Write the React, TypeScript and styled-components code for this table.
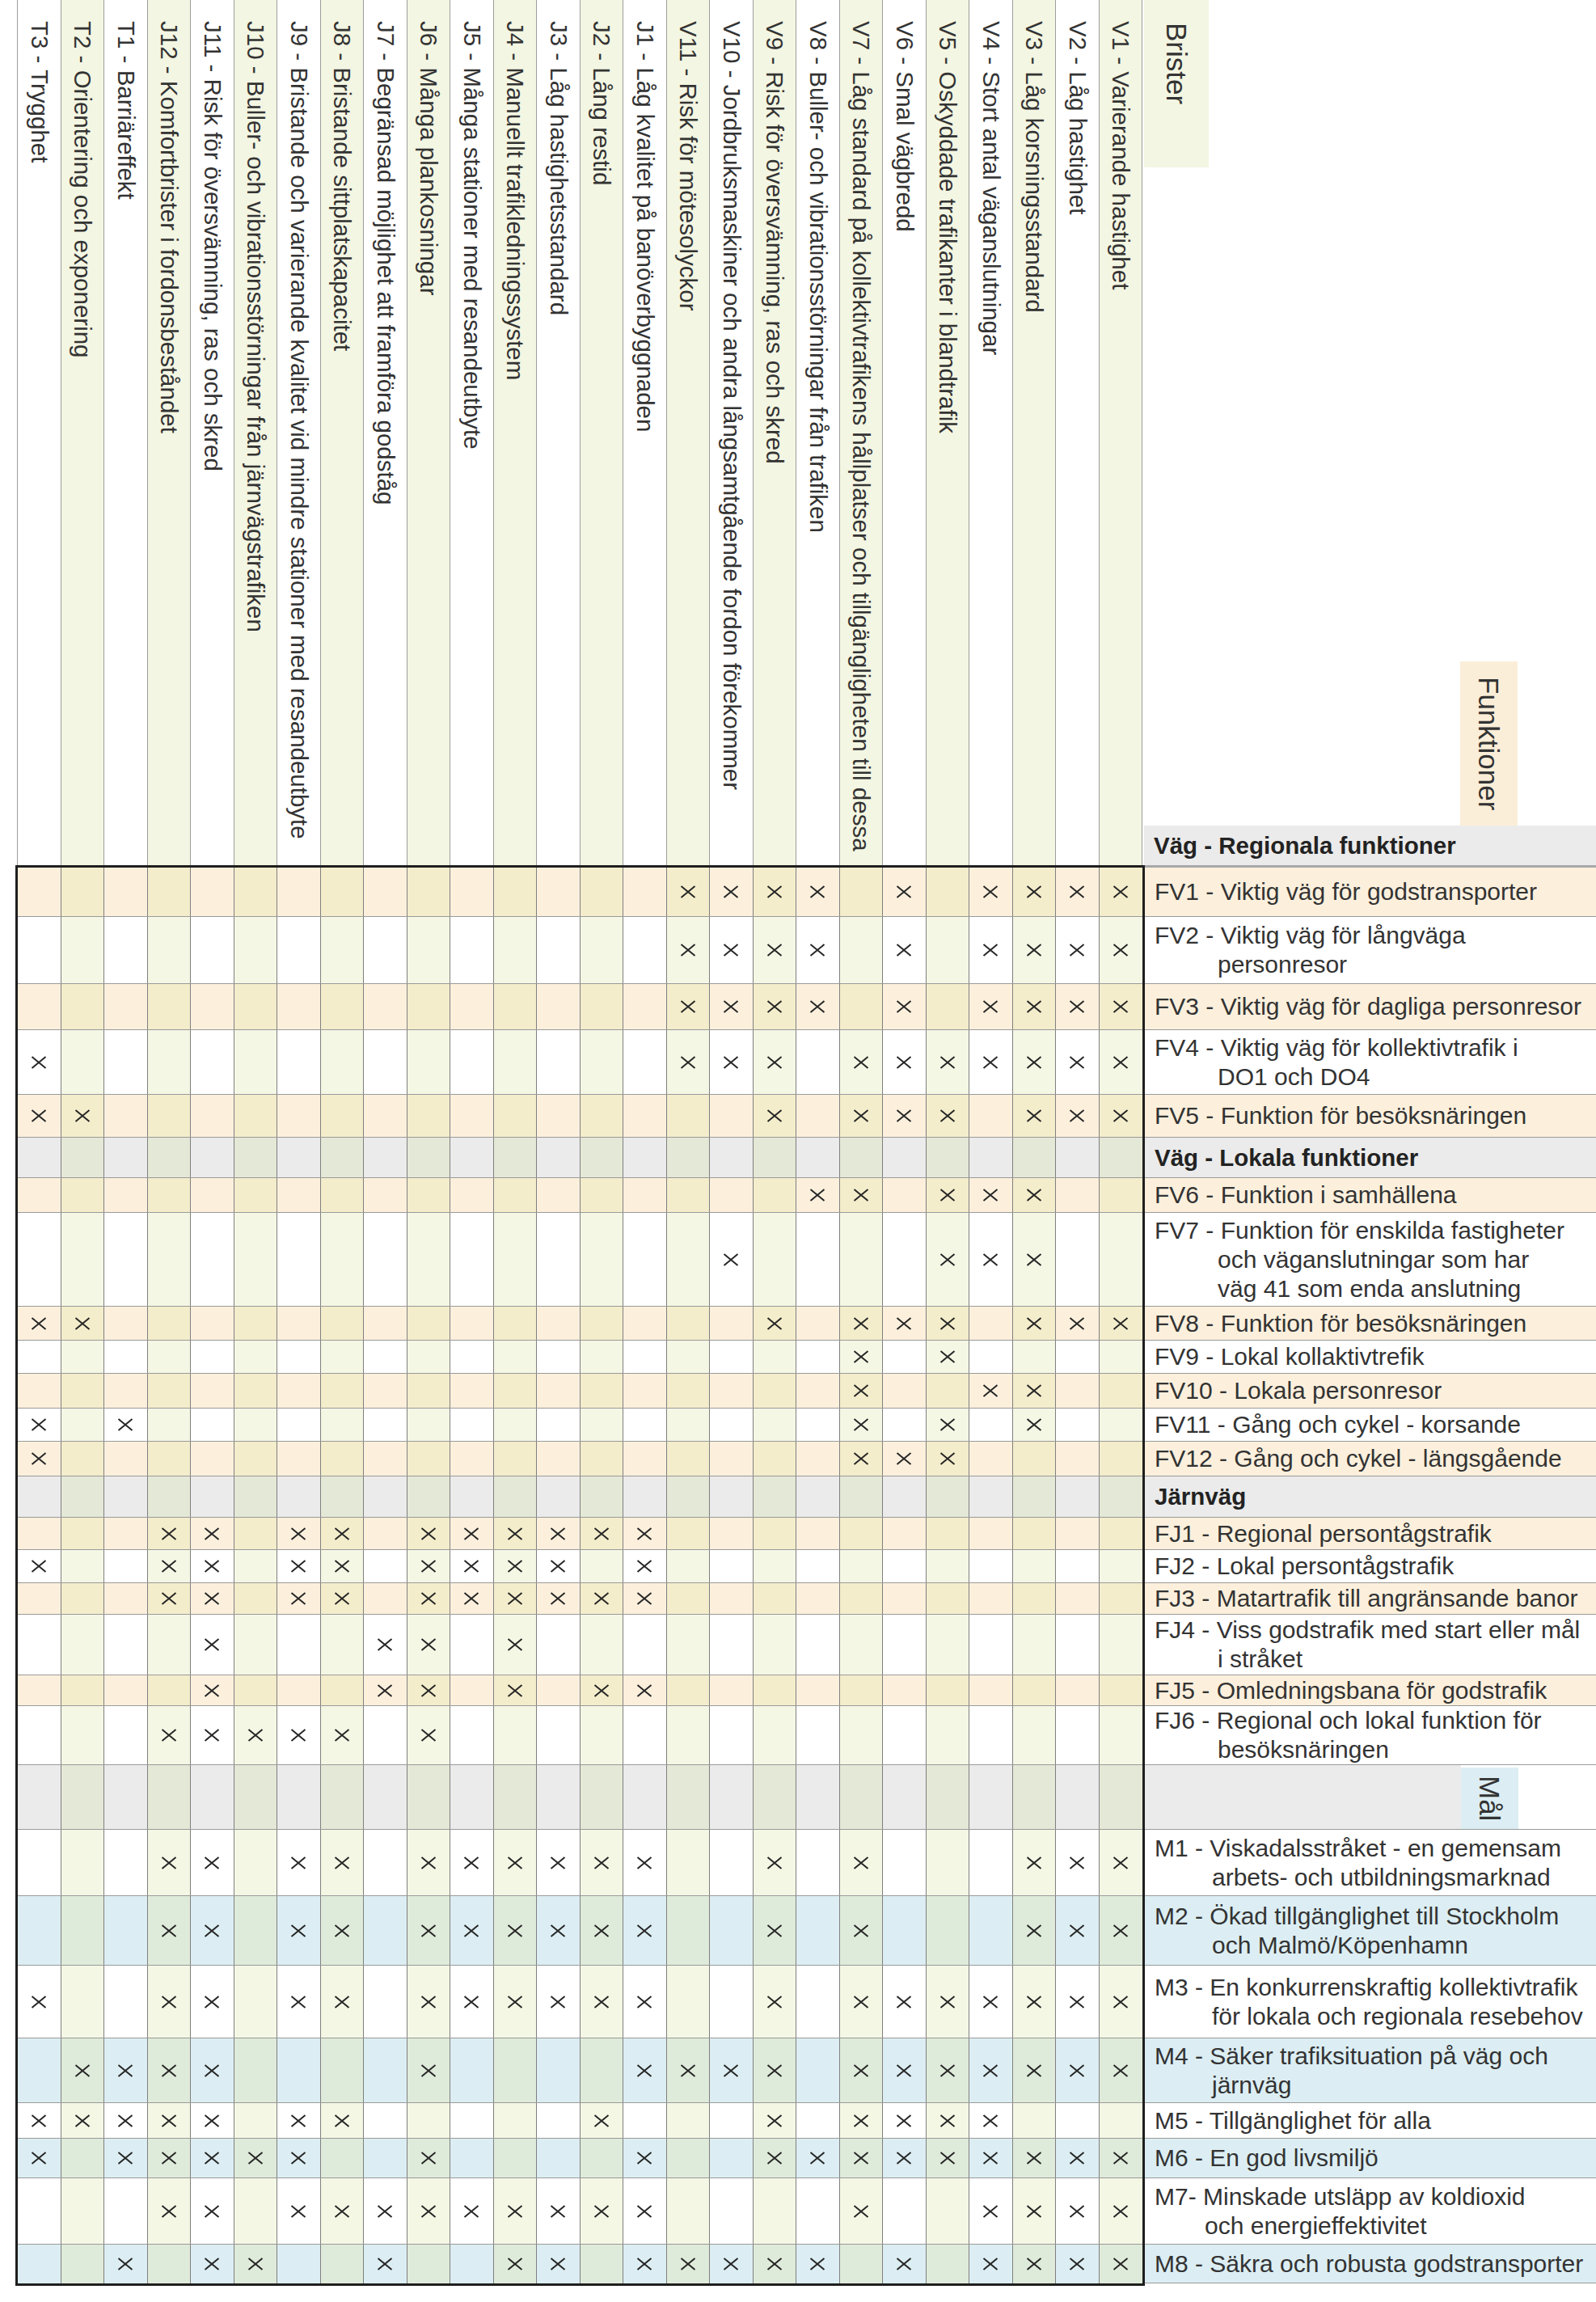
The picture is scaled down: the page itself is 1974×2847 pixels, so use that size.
import React from 'react';
import styled, { createGlobalStyle } from 'styled-components';

const GlobalStyle = createGlobalStyle`
  html, body { margin: 0; padding: 0; background: #ffffff; }
  body { font-family: "Liberation Sans", Arial, Helvetica, sans-serif; color: #333333; }
`;

type Tone = 'white' | 'peach' | 'grey' | 'blue';

const COL_W = 53.5;

const cellColors: Record<Tone, [string, string]> = {
  white: ['#ffffff', '#f4f7e4'],
  peach: ['#fcf0dd', '#f4edcb'],
  grey: ['#ebebeb', '#e4e8d6'],
  blue: ['#dceef3', '#dfebda'],
};

const labelColors: Record<Tone, string> = {
  white: '#ffffff',
  peach: '#fcf0dd',
  grey: '#ebebeb',
  blue: '#dceef3',
};

const columns = [
  'T3 - Trygghet',
  'T2 - Orientering och exponering',
  'T1 - Barriäreffekt',
  'J12 - Komfortbrister i fordonsbeståndet',
  'J11 - Risk för översvämning, ras och skred',
  'J10 - Buller- och vibrationsstörningar från järnvägstrafiken',
  'J9 - Bristande och varierande kvalitet vid mindre stationer med resandeutbyte',
  'J8 - Bristande sittplatskapacitet',
  'J7 - Begränsad möjlighet att framföra godståg',
  'J6 - Många plankosningar',
  'J5 - Många stationer med resandeutbyte',
  'J4 - Manuellt trafikledningssystem',
  'J3 - Låg hastighetsstandard',
  'J2 - Lång restid',
  'J1 - Låg kvalitet på banöverbyggnaden',
  'V11 - Risk för mötesolyckor',
  'V10 - Jordbruksmaskiner och andra långsamtgående fordon förekommer',
  'V9 - Risk för översvämning, ras och skred',
  'V8 - Buller- och vibrationsstörningar från trafiken',
  'V7 - Låg standard på kollektivtrafikens hållplatser och tillgängligheten till dessa',
  'V6 - Smal vägbredd',
  'V5 - Oskyddade trafikanter i blandtrafik',
  'V4 - Stort antal väganslutningar',
  'V3 - Låg korsningsstandard',
  'V2 - Låg hastighet',
  'V1 - Varierande hastighet',
];

type Row =
  | { kind: 'item'; tone: Tone; h: number; lines: string[]; hang: number; marks: number[] }
  | { kind: 'section'; tone: Tone; h: number; title: string }
  | { kind: 'goals'; tone: Tone; h: number };

const RD = [15, 16, 17, 18, 20, 22, 23, 24, 25];
const M12 = [3, 4, 6, 7, 9, 10, 11, 12, 13, 14, 17, 19, 23, 24, 25];

const rows: Row[] = [
  { kind: 'item', tone: 'peach', h: 61, hang: 90, lines: ['FV1 - Viktig väg för godstransporter'], marks: RD },
  { kind: 'item', tone: 'white', h: 83, hang: 90, lines: ['FV2 - Viktig väg för långväga', 'personresor'], marks: RD },
  { kind: 'item', tone: 'peach', h: 57, hang: 90, lines: ['FV3 - Viktig väg för dagliga personresor'], marks: RD },
  { kind: 'item', tone: 'white', h: 80, hang: 90, lines: ['FV4 - Viktig väg för kollektivtrafik i', 'DO1 och DO4'], marks: [0, 15, 16, 17, 19, 20, 21, 22, 23, 24, 25] },
  { kind: 'item', tone: 'peach', h: 53, hang: 90, lines: ['FV5 - Funktion för besöksnäringen'], marks: [0, 1, 17, 19, 20, 21, 23, 24, 25] },
  { kind: 'section', tone: 'grey', h: 50, title: 'Väg - Lokala funktioner' },
  { kind: 'item', tone: 'peach', h: 43, hang: 90, lines: ['FV6 - Funktion i samhällena'], marks: [18, 19, 21, 22, 23] },
  { kind: 'item', tone: 'white', h: 116, hang: 90, lines: ['FV7 - Funktion för enskilda fastigheter', 'och väganslutningar som har', 'väg 41 som enda anslutning'], marks: [16, 21, 22, 23] },
  { kind: 'item', tone: 'peach', h: 42, hang: 90, lines: ['FV8 - Funktion för besöksnäringen'], marks: [0, 1, 17, 19, 20, 21, 23, 24, 25] },
  { kind: 'item', tone: 'white', h: 41, hang: 90, lines: ['FV9 - Lokal kollaktivtrefik'], marks: [19, 21] },
  { kind: 'item', tone: 'peach', h: 43, hang: 90, lines: ['FV10 - Lokala personresor'], marks: [19, 22, 23] },
  { kind: 'item', tone: 'white', h: 41, hang: 90, lines: ['FV11 - Gång och cykel - korsande'], marks: [0, 2, 19, 21, 23] },
  { kind: 'item', tone: 'peach', h: 43, hang: 90, lines: ['FV12 - Gång och cykel - längsgående'], marks: [0, 19, 20, 21] },
  { kind: 'section', tone: 'grey', h: 51, title: 'Järnväg' },
  { kind: 'item', tone: 'peach', h: 40, hang: 90, lines: ['FJ1 - Regional persontågstrafik'], marks: [3, 4, 6, 7, 9, 10, 11, 12, 13, 14] },
  { kind: 'item', tone: 'white', h: 41, hang: 90, lines: ['FJ2 - Lokal persontågstrafik'], marks: [0, 3, 4, 6, 7, 9, 10, 11, 12, 14] },
  { kind: 'item', tone: 'peach', h: 39, hang: 90, lines: ['FJ3 - Matartrafik till angränsande banor'], marks: [3, 4, 6, 7, 9, 10, 11, 12, 13, 14] },
  { kind: 'item', tone: 'white', h: 75, hang: 90, lines: ['FJ4 - Viss godstrafik med start eller mål', 'i stråket'], marks: [4, 8, 9, 11] },
  { kind: 'item', tone: 'peach', h: 38, hang: 90, lines: ['FJ5 - Omledningsbana för godstrafik'], marks: [4, 8, 9, 11, 13, 14] },
  { kind: 'item', tone: 'white', h: 73, hang: 90, lines: ['FJ6 - Regional och lokal funktion för', 'besöksnäringen'], marks: [3, 4, 5, 6, 7, 9] },
  { kind: 'goals', tone: 'grey', h: 80 },
  { kind: 'item', tone: 'white', h: 82, hang: 83, lines: ['M1 - Viskadalsstråket - en gemensam', 'arbets- och utbildningsmarknad'], marks: M12 },
  { kind: 'item', tone: 'blue', h: 86, hang: 83, lines: ['M2 - Ökad tillgänglighet till Stockholm', 'och Malmö/Köpenhamn'], marks: M12 },
  { kind: 'item', tone: 'white', h: 90, hang: 83, lines: ['M3 - En konkurrenskraftig kollektivtrafik', 'för lokala och regionala resebehov'], marks: [0, 3, 4, 6, 7, 9, 10, 11, 12, 13, 14, 17, 19, 20, 21, 22, 23, 24, 25] },
  { kind: 'item', tone: 'blue', h: 80, hang: 83, lines: ['M4 - Säker trafiksituation på väg och', 'järnväg'], marks: [1, 2, 3, 4, 9, 14, 15, 16, 17, 19, 20, 21, 22, 23, 24, 25] },
  { kind: 'item', tone: 'white', h: 44, hang: 83, lines: ['M5 - Tillgänglighet för alla'], marks: [0, 1, 2, 3, 4, 6, 7, 13, 17, 19, 20, 21, 22] },
  { kind: 'item', tone: 'blue', h: 49, hang: 83, lines: ['M6 - En god livsmiljö'], marks: [0, 2, 3, 4, 5, 6, 9, 14, 17, 18, 19, 20, 21, 22, 23, 24, 25] },
  { kind: 'item', tone: 'white', h: 82, hang: 74, lines: ['M7- Minskade utsläpp av koldioxid', 'och energieffektivitet'], marks: [3, 4, 6, 7, 8, 9, 10, 11, 12, 13, 14, 19, 22, 23, 24, 25] },
  { kind: 'item', tone: 'blue', h: 48, hang: 83, lines: ['M8 - Säkra och robusta godstransporter'], marks: [2, 4, 5, 8, 11, 12, 14, 15, 16, 17, 18, 20, 22, 23, 24, 25] },
];

/* ---------- styled parts ---------- */

const Page = styled.div`
  width: 1974px;
  height: 2847px;
  background: #ffffff;
  overflow: hidden;
`;

const HeadRow = styled.div`
  display: flex;
  height: 1070px;
`;

const ColHeads = styled.div`
  display: flex;
  margin-left: 21px;
  border-left: 1px solid #9d9d9d;
`;

const ColHead = styled.div<{ $band: boolean }>`
  box-sizing: border-box;
  width: ${COL_W}px;
  height: 100%;
  padding-top: 26px;
  border-right: 1px solid #9d9d9d;
  background: ${(p) => (p.$band ? '#f3f6e2' : '#ffffff')};
  writing-mode: vertical-rl;
  line-height: ${COL_W - 1}px;
  font-size: 29.5px;
  color: #333333;
  white-space: nowrap;
`;

const SideHead = styled.div`
  flex: 1;
  margin-left: 2px;
  display: flex;
  flex-direction: column;
`;

const Tag = styled.div<{ $bg: string; $w: number; $h: number }>`
  box-sizing: border-box;
  align-self: flex-start;
  width: ${(p) => p.$w}px;
  height: ${(p) => p.$h}px;
  background: ${(p) => p.$bg};
  writing-mode: vertical-rl;
  line-height: ${(p) => p.$w}px;
  font-size: 35px;
  color: #333333;
  white-space: nowrap;
`;

const BristerTag = styled(Tag)`
  padding-top: 28px;
`;

const FunktionerTag = styled(Tag)`
  margin-left: 391px;
  text-align: center;
`;

const Spacer = styled.div`
  flex: 1;
`;

const SectionBand = styled.div<{ $h: number }>`
  box-sizing: border-box;
  height: ${(p) => p.$h}px;
  display: flex;
  align-items: center;
  padding-left: 12px;
  background: #ebebeb;
  font-size: 29.5px;
  font-weight: bold;
  color: #222222;
  white-space: nowrap;
`;

const Body = styled.div`
  display: flex;
  align-items: flex-start;
`;

const Matrix = styled.div`
  margin-left: 19px;
  border: 3px solid #1f1f1f;
  display: flex;
  flex-direction: column;
`;

const MatrixRow = styled.div<{ $h: number }>`
  box-sizing: border-box;
  display: flex;
  height: ${(p) => p.$h}px;
  border-bottom: 1px solid #9a9a9a;
  &:last-child {
    border-bottom: none;
  }
`;

const Cell = styled.div<{ $tone: Tone; $band: boolean }>`
  box-sizing: border-box;
  width: ${COL_W}px;
  display: flex;
  align-items: center;
  justify-content: center;
  border-right: 1px solid #7f7f7f;
  background: ${(p) => cellColors[p.$tone][p.$band ? 1 : 0]};
  &:last-child {
    border-right: none;
  }
`;

const Labels = styled.div`
  flex: 1;
  display: flex;
  flex-direction: column;
  border-top: 3px solid #a8a8a8;
`;

const LabelRow = styled.div<{ $h: number; $tone: Tone }>`
  box-sizing: border-box;
  height: ${(p) => p.$h}px;
  display: flex;
  align-items: center;
  border-bottom: 1px solid #9a9a9a;
  background: ${(p) => labelColors[p.$tone]};
`;

const LabelText = styled.div<{ $hang: number }>`
  padding-left: ${(p) => p.$hang}px;
  text-indent: ${(p) => -(p.$hang - 12)}px;
  font-size: 30px;
  line-height: 36px;
  color: #333333;
  white-space: nowrap;
`;

const SectionTitle = styled.div`
  padding-left: 12px;
  font-size: 29.5px;
  font-weight: bold;
  color: #222222;
  white-space: nowrap;
`;

const GoalFill = styled.div`
  align-self: stretch;
  width: 391px;
  background: #ebebeb;
`;

const GoalTag = styled.div`
  align-self: stretch;
  width: 71px;
  margin-top: 3px;
  background: #dceef3;
  writing-mode: vertical-rl;
  line-height: 71px;
  text-align: center;
  font-size: 35px;
  color: #333333;
`;

const Cross = () => (
  <svg width="20" height="16" viewBox="0 0 20 16" aria-hidden="true">
    <path d="M1.5 1 L18.5 15 M18.5 1 L1.5 15" stroke="#262626" strokeWidth="2" fill="none" />
  </svg>
);

const LabelCell: React.FC<{ row: Row }> = ({ row }) => {
  if (row.kind === 'section') {
    return (
      <LabelRow $h={row.h} $tone="grey">
        <SectionTitle>{row.title}</SectionTitle>
      </LabelRow>
    );
  }
  if (row.kind === 'goals') {
    return (
      <LabelRow $h={row.h} $tone="white">
        <GoalFill />
        <GoalTag>Mål</GoalTag>
      </LabelRow>
    );
  }
  return (
    <LabelRow $h={row.h} $tone={row.tone}>
      <LabelText $hang={row.hang}>
        {row.lines.map((l, i) => (
          <React.Fragment key={i}>
            {i > 0 && <br />}
            {l}
          </React.Fragment>
        ))}
      </LabelText>
    </LabelRow>
  );
};

export default function App() {
  return (
    <Page>
      <GlobalStyle />
      <HeadRow>
        <ColHeads>
          {columns.map((c, i) => (
            <ColHead key={c} $band={i % 2 === 1}>
              {c}
            </ColHead>
          ))}
        </ColHeads>
        <SideHead>
          <BristerTag $bg="#f3f6e2" $w={80} $h={207}>
            Brister
          </BristerTag>
          <Spacer />
          <FunktionerTag $bg="#fbeed8" $w={71} $h={203}>
            Funktioner
          </FunktionerTag>
          <SectionBand $h={49}>Väg - Regionala funktioner</SectionBand>
        </SideHead>
      </HeadRow>
      <Body>
        <Matrix>
          {rows.map((r, ri) => {
            const marks = r.kind === 'item' ? r.marks : [];
            return (
              <MatrixRow key={ri} $h={r.h}>
                {columns.map((_, ci) => (
                  <Cell key={ci} $tone={r.tone} $band={ci % 2 === 1}>
                    {marks.includes(ci) && <Cross />}
                  </Cell>
                ))}
              </MatrixRow>
            );
          })}
        </Matrix>
        <Labels>
          {rows.map((r, ri) => (
            <LabelCell key={ri} row={r} />
          ))}
        </Labels>
      </Body>
    </Page>
  );
}
